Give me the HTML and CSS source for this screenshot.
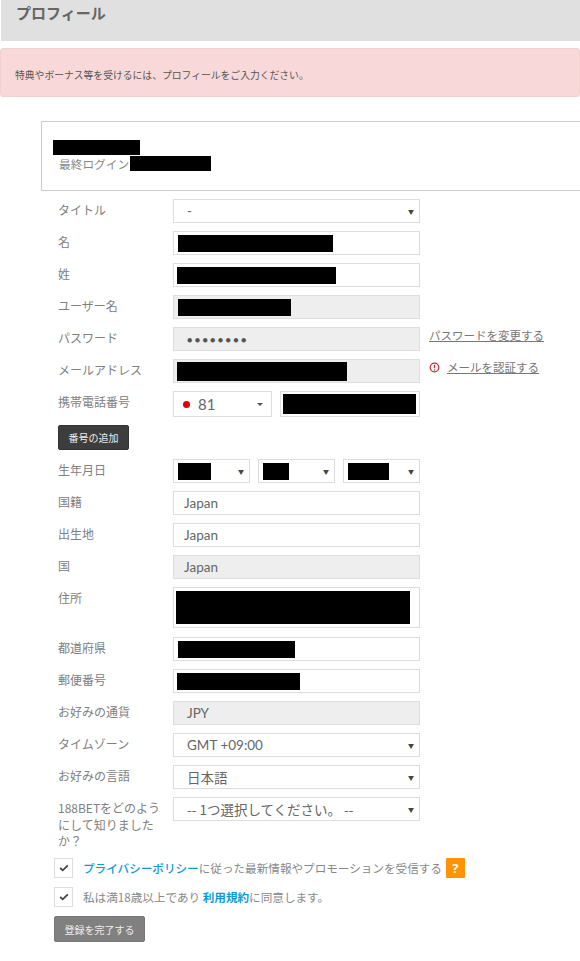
FILE: index.html
```html
<!DOCTYPE html>
<html lang="ja">
<head>
  <meta charset="UTF-8">
  <title>プロフィール</title>
  <link rel="stylesheet" href="styles.css">
</head>
<body>
  <div class="page-title">プロフィール</div>
  <div class="alert">特典やボーナス等を受けるには、プロフィールをご入力ください。</div>

  <div class="login-box">
    <div class="black login-name"></div>
    <div class="login-last">最終ログイン<span class="black login-date"></span></div>
  </div>

  <div class="form">
    <div class="row">
      <div class="label">タイトル</div>
      <div class="field select">-<span class="arrow">▼</span></div>
    </div>
    <div class="row">
      <div class="label">名</div>
      <div class="field masked"><span class="black" style="width:155px"></span></div>
    </div>
    <div class="row">
      <div class="label">姓</div>
      <div class="field masked wide"><span class="black" style="width:159px"></span></div>
    </div>
    <div class="row">
      <div class="label">ユーザー名</div>
      <div class="field masked off"><span class="black" style="width:113px"></span></div>
    </div>
    <div class="row">
      <div class="label">パスワード</div>
      <div class="field off dots">●●●●●●●●</div>
      <a class="side-link" href="#">パスワードを変更する</a>
    </div>
    <div class="row">
      <div class="label">メールアドレス</div>
      <div class="field masked wide off"><span class="black tall" style="width:170px"></span></div>
      <div class="side-link-wrap">
        <svg class="warn" viewBox="0 0 12 12" width="11" height="11"><circle cx="6" cy="6" r="4.7" fill="none" stroke="#c8263a" stroke-width="1.3"/><path d="M6 3v3.7M6 8v1.2" stroke="#c8263a" stroke-width="1.3" fill="none"/></svg>
        <a class="side-link" href="#">メールを認証する</a>
      </div>
    </div>
    <div class="row phone-row">
      <div class="label">携帯電話番号</div>
      <div class="phone">
        <div class="field code"><span class="dot"></span>81<span class="caret"></span></div>
        <div class="field number"><span class="black"></span></div>
      </div>
    </div>
    <div class="add-row"><button class="btn-add">番号の追加</button></div>
    <div class="row">
      <div class="label">生年月日</div>
      <div class="birth">
        <div class="field select masked"><span class="black" style="width:33px"></span><span class="arrow">▼</span></div>
        <div class="field select masked"><span class="black" style="width:26px"></span><span class="arrow">▼</span></div>
        <div class="field select masked"><span class="black" style="width:41px"></span><span class="arrow">▼</span></div>
      </div>
    </div>
    <div class="row">
      <div class="label">国籍</div>
      <div class="field plain">Japan</div>
    </div>
    <div class="row">
      <div class="label">出生地</div>
      <div class="field plain">Japan</div>
    </div>
    <div class="row">
      <div class="label">国</div>
      <div class="field plain off">Japan</div>
    </div>
    <div class="row address-row">
      <div class="label">住所</div>
      <div class="field masked address"><span class="black"></span></div>
    </div>
    <div class="row">
      <div class="label">都道府県</div>
      <div class="field masked"><span class="black" style="width:117px"></span></div>
    </div>
    <div class="row">
      <div class="label">郵便番号</div>
      <div class="field masked wide"><span class="black" style="width:123px"></span></div>
    </div>
    <div class="row">
      <div class="label">お好みの通貨</div>
      <div class="field off">JPY</div>
    </div>
    <div class="row">
      <div class="label">タイムゾーン</div>
      <div class="field select">GMT +09:00<span class="arrow">▼</span></div>
    </div>
    <div class="row">
      <div class="label">お好みの言語</div>
      <div class="field select jp">日本語<span class="arrow">▼</span></div>
    </div>
    <div class="row how-row">
      <div class="label">188BETをどのようにして知りましたか？</div>
      <div class="field select jp">-- 1つ選択してください。 --<span class="arrow">▼</span></div>
    </div>

    <div class="check-row first">
      <span class="check"><svg viewBox="0 0 12 10" width="10" height="8"><path d="M1.2 5l3.2 3L10.8 1.6" fill="none" stroke="#444" stroke-width="2.2"/></svg></span>
      <span><a class="blue" href="#">プライバシーポリシー</a>に従った最新情報やプロモーションを受信する</span>
      <span class="help">?</span>
    </div>
    <div class="check-row">
      <span class="check"><svg viewBox="0 0 12 10" width="10" height="8"><path d="M1.2 5l3.2 3L10.8 1.6" fill="none" stroke="#444" stroke-width="2.2"/></svg></span>
      <span>私は満18歳以上であり <a class="blue bold" href="#">利用規約</a>に同意します。</span>
    </div>
    <button class="btn-done">登録を完了する</button>
  </div>
</body>
</html>
```

FILE: styles.css
```css
* {
  box-sizing: border-box;
}

html, body {
  overflow: hidden;
}

body {
  margin: 0;
  height: 961px;
  background: #fff;
  color: #777;
  font-family: "Noto Sans CJK JP", "Open Sans", sans-serif;
  font-size: 12px;
}

.page-title {
  height: 41px;
  margin-left: 1px;
  padding: 3px 0 0 15px;
  background: #e0e0e0;
  color: #666;
  font-size: 15px;
  font-weight: bold;
  line-height: 20px;
}

.alert {
  height: 49px;
  margin-top: 7px;
  padding: 17px 0 0 14px;
  background: #f8d8d8;
  border: 1px solid #f2d2d0;
  border-radius: 3px;
  color: #555;
  font-size: 9.8px;
  line-height: 18px;
}

.black {
  display: block;
  background: #000;
}

.login-box {
  width: 560px;
  height: 70px;
  margin: 24px 0 0 41px;
  padding-top: 18px;
  border: 1px solid #ccc;
  border-right: 0;
}

.login-name {
  width: 87px;
  height: 15px;
  margin-left: 11px;
}

.login-last {
  display: flex;
  align-items: center;
  height: 15px;
  margin: 1px 0 0 17px;
  color: #888;
  font-size: 11.7px;
}

.login-date {
  width: 81px;
  height: 15px;
  margin-left: 1px;
}

.form {
  position: relative;
  padding: 8px 0 0 58px;
}

.row {
  display: flex;
  align-items: flex-start;
  min-height: 24px;
  margin-bottom: 8px;
}

.label {
  flex: none;
  width: 115px;
  padding: 2px 10px 0 0;
  color: #808080;
  font-size: 12px;
  line-height: 17px;
}

.field {
  position: relative;
  display: flex;
  align-items: center;
  flex: none;
  width: 247px;
  height: 24px;
  padding-left: 13px;
  background: #fff;
  border: 1px solid #ddd;
  color: #666;
  font-family: "Lato", "Noto Sans CJK JP", sans-serif;
  font-size: 13.5px;
}

.plain {
  padding-left: 10px;
}

.jp {
  font-family: "Noto Sans CJK JP", sans-serif;
}

.off {
  background: #eee;
}

.masked {
  padding-left: 4px;
}

.masked.wide {
  padding-left: 3px;
}

.masked .black {
  height: 17px;
}

.masked .black.tall {
  height: 19px;
}

.dots {
  color: #555;
  font-size: 9px;
  letter-spacing: 2.3px;
}

.arrow {
  position: absolute;
  top: 50%;
  right: 5px;
  color: #444;
  font-size: 6px;
  transform: translateY(-50%);
}

.side-link {
  color: #777;
  font-size: 11.5px;
  line-height: 16px;
}

.row > .side-link {
  margin-left: 9px;
}

.side-link-wrap {
  display: flex;
  align-items: center;
  margin-left: 9px;
  line-height: 16px;
}

.warn {
  margin-right: 7px;
}

.phone-row {
  height: 26px;
  margin-bottom: 8px;
}

.phone {
  display: flex;
  gap: 8px;
  width: 247px;
}

.code {
  width: 99px;
  height: 26px;
  padding-left: 9px;
  font-size: 15px;
}

.dot {
  width: 7px;
  height: 7px;
  margin-right: 8px;
  border-radius: 50%;
  background: #e00010;
}

.caret {
  position: absolute;
  top: 11px;
  right: 8px;
  border-top: 3px solid #555;
  border-left: 3px solid transparent;
  border-right: 3px solid transparent;
}

.number {
  width: 140px;
  height: 26px;
  padding: 2px;
}

.number .black {
  width: 133px;
  height: 20px;
}

.add-row {
  height: 26px;
  margin-bottom: 8px;
}

.btn-add {
  display: block;
  width: 71px;
  height: 25px;
  padding: 0;
  background: #3d3d3d;
  border: 1px solid #333;
  border-radius: 2px;
  color: #eee;
  font-family: inherit;
  font-size: 10px;
}

.birth {
  display: flex;
  justify-content: space-between;
  width: 247px;
}

.birth .field {
  width: 77px;
}

.address-row {
  min-height: 41px;
  margin-bottom: 9px;
}

.address {
  height: 41px;
  padding-left: 2px;
}

.address .black {
  width: 234px;
  height: 33px;
}

.how-row {
  height: 54px;
  margin-bottom: 0;
}

.how-row .label {
  padding-top: 3px;
  line-height: 16.5px;
}

.check-row {
  display: flex;
  align-items: center;
  height: 20px;
  margin: 0 0 9px -4px;
  color: #888;
  font-size: 11.6px;
  white-space: nowrap;
}

.check-row.first {
  margin-top: 7px;
}

.check {
  display: flex;
  align-items: center;
  justify-content: center;
  flex: none;
  width: 19px;
  height: 20px;
  margin-right: 10px;
  border: 1px solid #ddd;
}

.blue {
  color: #0d9bd8;
  font-weight: 500;
  text-decoration: none;
}

.bold {
  font-weight: bold;
}

.help {
  display: flex;
  align-items: center;
  justify-content: center;
  width: 19px;
  height: 20px;
  margin-left: 4px;
  background: #ff9400;
  border-radius: 1px;
  color: #fff;
  font-family: "Open Sans", sans-serif;
  font-size: 13px;
  font-weight: bold;
}

.btn-done {
  display: block;
  width: 91px;
  height: 26px;
  margin: 0 0 0 -4px;
  padding: 0;
  background: #808080;
  border: 1px solid #777;
  border-radius: 2px;
  color: #eee;
  font-family: inherit;
  font-size: 10px;
}
```
